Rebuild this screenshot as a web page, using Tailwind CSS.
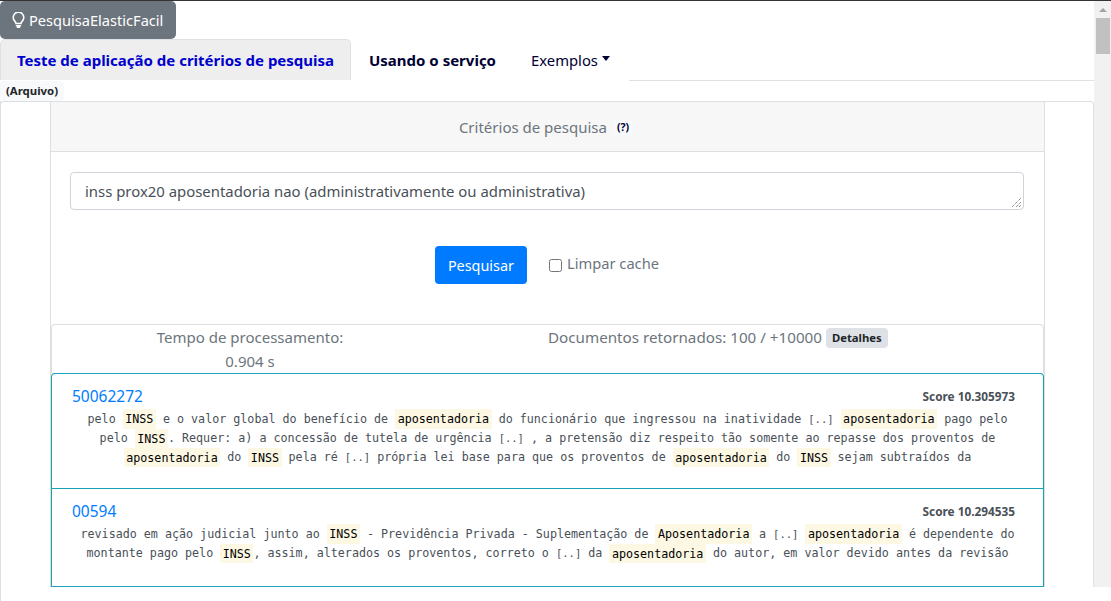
<!DOCTYPE html>
<html lang="en">
  <head>
    <meta charset="UTF-8" />
    <title>PesquisaElasticFacil</title>
    <script src="https://cdn.jsdelivr.net/npm/@tailwindcss/browser@4"></script>
  </head>
  <body class="bg-white text-[#212529] font-['Noto_Sans',sans-serif]">
    <div class="w-[1111px] h-[601px] overflow-hidden">
      <div class="h-[601px] flex border-t border-[#333]">
        <!-- page -->
        <div class="w-[1094px] flex flex-col">
          <div class="h-[38px]">
            <button class="h-[38px] w-[176px] rounded-[5px] bg-[#6c757d] text-white text-[14.6px] flex items-center pl-3 gap-1 pt-[2px]">
              <svg class="-mt-[2px]" width="13" height="16" viewBox="0 0 13 16" fill="none" stroke="white" stroke-width="1.6"><path d="M4 11.5C4 9.5 1.2 8.5 1.2 5.5a5.3 5.3 0 0 1 10.6 0C11.8 8.5 9 9.5 9 11.5z"/><path d="M4.5 13.7h4M5.5 15.3h2" stroke-linecap="round"/></svg>
              <span>PesquisaElasticFacil</span>
            </button>
          </div>

          <!-- tabs -->
          <div class="h-[42px] flex items-start">
            <div class="w-[351px] h-[41px] pt-px bg-[#eeeeee] border border-b-0 border-[#dee2e6] rounded-t-[5px] flex items-center justify-center font-bold text-[#0000cd] text-[15px]">Teste de aplicação de critérios de pesquisa</div>
            <div class="w-[156px] h-[41px] pt-[2px] pl-[7px] flex items-center justify-center font-bold text-[#000033] text-[15px]">Usando o serviço</div>
            <div class="w-[122px] h-[41px] pt-[2px] pl-[5px] flex items-center justify-center text-[#000033] text-[14.8px] gap-1">
              Exemplos
              <span class="w-0 h-0 border-x-[4.5px] border-x-transparent border-t-[5px] border-t-[#000033] mb-1"></span>
            </div>
            <div class="flex-1 h-[42px] border-b border-[#dee2e6]"></div>
          </div>

          <div class="h-[20px] flex items-start">
            <span class="bg-[#f8f9fa] rounded-[4px] px-1.5 h-[20px] leading-[20px] text-[11.4px] font-bold text-[#212529]">(Arquivo)</span>
          </div>

          <!-- outer card -->
          <div class="flex-1 border-l border-[#dfdfdf]">
            <div class="h-[486px] border-t border-r border-[#dfdfdf] rounded-t-[4px] pl-[49px] pr-[48px] -ml-px border-l border-l-[#dfdfdf]">
              <div class="h-full border-x border-[#dfdfdf] flex flex-col">
                <div class="h-[50px] pt-[2px] pr-[3px] bg-[#f7f7f7] border-b border-[#dfdfdf] flex items-center justify-center text-[#6c757d] text-[15px]">
                  <span>Critérios de pesquisa</span>
                  <span class="ml-[6px] text-[10.5px] font-bold text-[#000033] bg-[#f8f9fa] rounded px-1">(?)</span>
                </div>

                <div class="h-[172px] pl-[19px] pr-5 pt-5">
                  <div class="h-[38px] border border-[#ced4da] rounded-[4px] flex items-center pl-[14px] pr-3 text-[#495057] text-[14.9px] relative">
                    inss prox20 aposentadoria nao (administrativamente ou administrativa)
                    <svg class="absolute right-0.5 bottom-0.5" width="9" height="9" viewBox="0 0 9 9" stroke="#666" stroke-width="1" stroke-dasharray="1 1"><path d="M0 9L9 0M4 9L9 4M7 9L9 7"/></svg>
                  </div>
                  <div class="flex justify-center items-center mt-[36px]">
                    <button class="w-[92px] h-[38px] pt-px bg-[#007bff] text-white rounded-[4px] text-[14.4px]">Pesquisar</button>
                    <label class="flex items-center ml-[22px] text-[#6c757d] text-[14.7px]">
                      <span class="w-[13px] h-[13px] border border-[#767676] rounded-[2.5px] mt-0.5 mr-[5px]"></span>
                      <span class="-mt-1">Limpar cache</span>
                    </label>
                  </div>
                </div>

                <!-- stats -->
                <div class="flex h-[49px] border-t border-x border-[#dfdfdf] rounded-t-[4px] text-[#6c757d] text-[15px] leading-6 text-center">
                  <div class="w-[396px]">Tempo de processamento:<br />0.904 s</div>
                  <div class="flex-1 pl-[100px] flex items-start">
                    <span class="text-[15.2px]">Documentos retornados: 100 / +10000</span>
                    <span class="ml-1 mt-[3px] h-[20px] leading-[20px] px-1.5 bg-[#dee2e6] rounded-[4px] text-[#212529] text-[11.3px] font-bold">Detalhes</span>
                  </div>
                </div>

                <!-- results -->
                <div class="border border-[#17a2b8] rounded-t-[4px] border-b-0">
                  <div class="h-[115px] border-b border-[#17a2b8] px-5 pt-[13px]">
                    <div class="flex justify-between items-center h-[20px]">
                      <a class="text-[#007bff] text-[15.5px]">50062272</a>
                      <span class="text-[#495057] text-[11.8px] font-bold mr-2">Score 10.305973</span>
                    </div>
                    <p class="mt-[3px] font-['DejaVu_Sans_Mono',monospace] text-[11.7px] leading-[19.2px] text-center text-[#495057]">
                      pelo <mark class="bg-[#fcf8e3] text-black px-[2.5px] py-[2.7px]">INSS</mark> e o valor global do benefício de <mark class="bg-[#fcf8e3] text-black px-[2.5px] py-[2.7px]">aposentadoria</mark> do funcionário que ingressou na inatividade <span class="text-[10.5px]">[..]</span> <mark class="bg-[#fcf8e3] text-black px-[2.5px] py-[2.7px]">aposentadoria</mark> pago pelo pelo <mark class="bg-[#fcf8e3] text-black px-[2.5px] py-[2.7px]">INSS</mark>. Requer: a) a concessão de tutela de urgência <span class="text-[10.5px]">[..]</span> , a pretensão diz respeito tão somente ao repasse dos proventos de <mark class="bg-[#fcf8e3] text-black px-[2.5px] py-[2.7px]">aposentadoria</mark> do <mark class="bg-[#fcf8e3] text-black px-[2.5px] py-[2.7px]">INSS</mark> pela ré <span class="text-[10.5px]">[..]</span> própria lei base para que os proventos de <mark class="bg-[#fcf8e3] text-black px-[2.5px] py-[2.7px]">aposentadoria</mark> do <mark class="bg-[#fcf8e3] text-black px-[2.5px] py-[2.7px]">INSS</mark> sejam subtraídos da
                    </p>
                  </div>
                  <div class="h-[98px] border-b border-[#17a2b8] px-5 pt-[13px]">
                    <div class="flex justify-between items-center h-[20px]">
                      <a class="text-[#007bff] text-[15.5px]">00594</a>
                      <span class="text-[#495057] text-[11.8px] font-bold mr-2">Score 10.294535</span>
                    </div>
                    <p class="mt-[3px] font-['DejaVu_Sans_Mono',monospace] text-[11.7px] leading-[19.2px] text-center text-[#495057]">
                      revisado em ação judicial junto ao <mark class="bg-[#fcf8e3] text-black px-[2.5px] py-[2.7px]">INSS</mark> - Previdência Privada - Suplementação de <mark class="bg-[#fcf8e3] text-black px-[2.5px] py-[2.7px]">Aposentadoria</mark> a <span class="text-[10.5px]">[..]</span> <mark class="bg-[#fcf8e3] text-black px-[2.5px] py-[2.7px]">aposentadoria</mark> é dependente do montante pago pelo <mark class="bg-[#fcf8e3] text-black px-[2.5px] py-[2.7px]">INSS</mark>, assim, alterados os proventos, correto o <span class="text-[10.5px]">[..]</span> da <mark class="bg-[#fcf8e3] text-black px-[2.5px] py-[2.7px]">aposentadoria</mark> do autor, em valor devido antes da revisão
                    </p>
                  </div>
                </div>
              </div>
            </div>
          </div>
        </div>

        <!-- scrollbar -->
        <div class="w-[17px] h-[586px] bg-[#f1f1f1] flex flex-col items-center">
          <span class="mt-[7px] w-0 h-0 border-x-[4px] border-x-transparent border-b-[4px] border-b-[#a3a3a3]"></span>
          <div class="mt-[6px] w-[14px] h-[36px] bg-[#c1c1c1] ml-px"></div>
        </div>
      </div>
    </div>
  </body>
</html>
